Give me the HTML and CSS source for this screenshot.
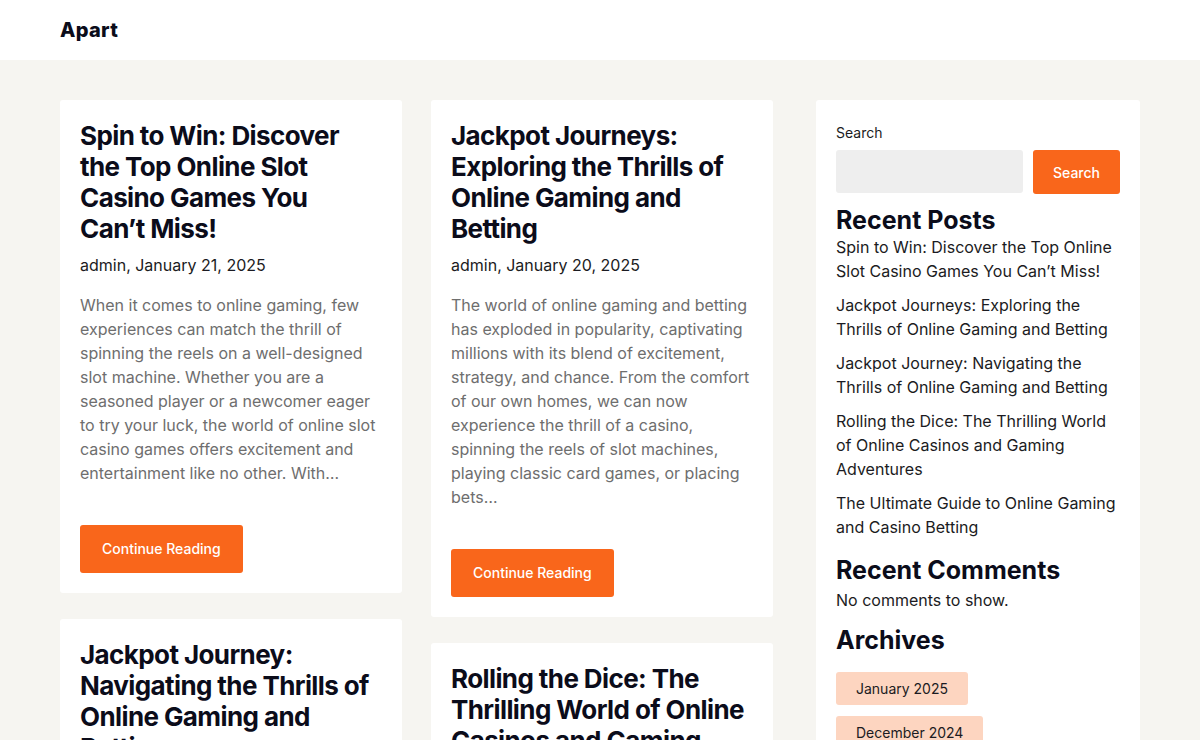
FILE: index.html
```html
<!DOCTYPE html>
<html lang="en">
<head>
<meta charset="utf-8">
<title>Apart</title>
<link rel="stylesheet" href="styles.css">
</head>
<body>
<header class="site-header">
  <div class="brand">Apart</div>
</header>
<div class="page">
  <main class="posts">
    <div class="col">
      <article class="card">
        <h2 class="card-title">Spin to Win: Discover the Top Online Slot Casino Games You Can’t&nbsp;Miss!</h2>
        <div class="meta">admin, January 21, 2025</div>
        <p class="excerpt">When it comes to online gaming, few experiences can match the thrill of spinning the reels on a well-designed slot machine. Whether you are a seasoned player or a newcomer eager to try your luck, the world of online slot casino games offers excitement and entertainment like no other. With…</p>
        <a class="btn" href="#">Continue Reading</a>
      </article>
      <article class="card">
        <h2 class="card-title">Jackpot Journey: Navigating the Thrills of Online Gaming and Betting</h2>
        <div class="meta">admin, January 19, 2025</div>
        <p class="excerpt">Online gaming and betting have become a thrilling part of modern entertainment.</p>
        <a class="btn" href="#">Continue Reading</a>
      </article>
    </div>
    <div class="col">
      <article class="card">
        <h2 class="card-title">Jackpot Journeys: Exploring the Thrills of Online Gaming and Betting</h2>
        <div class="meta">admin, January 20, 2025</div>
        <p class="excerpt">The world of online gaming and betting has exploded in popularity, captivating millions with its blend of excitement, strategy, and chance. From the comfort of our own homes, we can now experience the thrill of a casino, spinning the reels of slot machines, playing classic card games, or placing bets…</p>
        <a class="btn" href="#">Continue Reading</a>
      </article>
      <article class="card">
        <h2 class="card-title">Rolling the Dice: The Thrilling World of Online Casinos and Gaming Adventures</h2>
        <div class="meta">admin, January 18, 2025</div>
        <p class="excerpt">Online casinos have transformed the way we play.</p>
        <a class="btn" href="#">Continue Reading</a>
      </article>
    </div>
  </main>
  <aside class="sidebar">
    <label class="search-label" for="s">Search</label>
    <div class="search-row">
      <input id="s" class="search-input" type="text">
      <button class="search-btn">Search</button>
    </div>
    <h3 class="widget-title wt-posts">Recent Posts</h3>
    <ul class="post-list">
      <li>Spin to Win: Discover the Top Online Slot Casino Games You Can’t Miss!</li>
      <li>Jackpot Journeys: Exploring the Thrills of Online Gaming and Betting</li>
      <li>Jackpot Journey: Navigating the Thrills of Online Gaming and Betting</li>
      <li>Rolling the Dice: The Thrilling World of Online Casinos and Gaming Adventures</li>
      <li>The Ultimate Guide to Online Gaming and Casino Betting</li>
    </ul>
    <h3 class="widget-title wt-comments">Recent Comments</h3>
    <p class="no-comments">No comments to show.</p>
    <h3 class="widget-title wt-archives">Archives</h3>
    <div class="archives">
      <a class="pill" href="#">January 2025</a>
      <a class="pill" href="#">December 2024</a>
    </div>
  </aside>
</div>
</body>
</html>
```
FILE: styles.css
```css
* { box-sizing: border-box; }
html, body { margin: 0; padding: 0; }
body {
  background: #f6f5f1;
  font-family: Inter, "Noto Sans", sans-serif;
  color: #1b1b22;
  font-size: 16px;
  line-height: 24px;
}
.site-header {
  background: #fff;
  height: 60px;
  display: flex;
  align-items: center;
  padding: 0 60px;
}
.brand {
  font-family: Inter, sans-serif;
  font-weight: 800;
  font-size: 20px;
  color: #0b0c1a;
  letter-spacing: 0.3px;
}
.page {
  display: grid;
  grid-template-columns: 713px 324px;
  gap: 43px;
  padding: 40px 60px 0;
}
.posts {
  display: grid;
  grid-template-columns: 342px 342px;
  gap: 29px;
  align-items: start;
}
.col {
  display: flex;
  flex-direction: column;
  gap: 26px;
}
.card {
  background: #fff;
  border-radius: 3px;
  padding: 20px;
}
.card-title {
  margin: 0;
  font-family: Inter, sans-serif;
  font-weight: 700;
  font-size: 26px;
  line-height: 31px;
  letter-spacing: -0.6px;
  color: #0b0c1a;
}
.meta {
  margin-top: 9px;
  color: #1b1b22;
}
.excerpt {
  margin: 16px 0 40px;
  color: #6e6e6e;
}
.btn {
  display: inline-flex;
  align-items: center;
  height: 48px;
  padding: 0 22px;
  background: #f9661b;
  color: #fff;
  border-radius: 3px;
  font-size: 14px;
  font-weight: 500;
  text-decoration: none;
}
.sidebar {
  background: #fff;
  border-radius: 3px;
  padding: 23px 20px 20px;
  align-self: start;
  min-height: 700px;
}
.search-label {
  display: block;
  font-size: 14px;
  line-height: 20px;
  color: #1b1b22;
}
.search-row {
  display: flex;
  gap: 10px;
  margin-top: 7px;
}
.search-input {
  flex: 1;
  height: 43px;
  border: none;
  background: #eeeeee;
  border-radius: 3px;
}
.search-btn {
  width: 87px;
  height: 44px;
  border: none;
  background: #f9661b;
  color: #fff;
  border-radius: 3px;
  font-family: Inter, sans-serif;
  font-size: 14px;
  font-weight: 500;
}
.widget-title {
  margin: 0;
  font-family: Inter, sans-serif;
  font-weight: 700;
  font-size: 25px;
  line-height: 30px;
  color: #0b0c1a;
}
.wt-posts { margin: 11px 0 0; }
.wt-comments { margin: 16px 0 3px; }
.wt-archives { margin: 13px 0 0; }
.post-list {
  list-style: none;
  margin: 0;
  padding: 0;
  display: flex;
  flex-direction: column;
  gap: 10px;
}
.no-comments { margin: 0; }
.archives {
  margin-top: 17px;
  display: flex;
  flex-direction: column;
  align-items: flex-start;
  gap: 11px;
}
.pill {
  display: inline-flex;
  align-items: center;
  height: 33px;
  padding: 0 20px;
  background: #fdd5c0;
  color: #1b1b22;
  border-radius: 3px;
  font-size: 14px;
  text-decoration: none;
}
```
